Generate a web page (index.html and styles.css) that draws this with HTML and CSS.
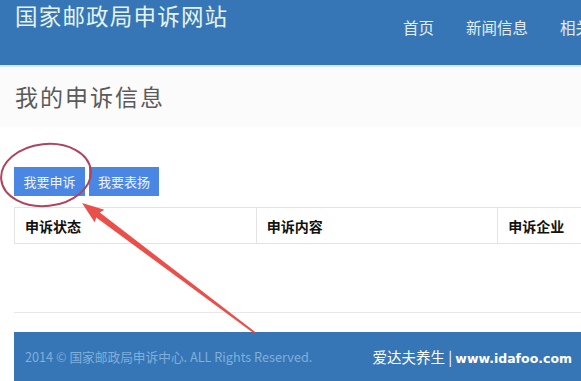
FILE: index.html
```html
<!DOCTYPE html>
<html lang="zh-CN">
<head>
    <meta charset="UTF-8">
    <meta name="viewport" content="width=device-width, initial-scale=1.0">
    <title>我的申诉信息 - 国家邮政局申诉网站</title>
    <link rel="stylesheet" href="styles.css">
</head>
<body>

<!-- Top bar -->
<div class="navbar">
    <div class="brand">国家邮政局申诉网站</div>
    <ul class="nav">
        <li>首页</li>
        <li>新闻信息</li>
        <li>相关法规</li>
    </ul>
</div>

<!-- Page title -->
<div class="page-header">
    <h1>我的申诉信息</h1>
</div>

<div class="content">
    <div class="actions">
        <button class="btn">我要申诉</button>
        <button class="btn">我要表扬</button>
    </div>

    <table class="list">
        <thead>
            <tr>
                <th>申诉状态</th>
                <th>申诉内容</th>
                <th>申诉企业</th>
            </tr>
        </thead>
        <tbody></tbody>
    </table>

    <hr class="divider">

    <div class="footer">
        <span class="copy">2014 &copy; 国家邮政局申诉中心. ALL Rights Reserved.</span>
        <span class="mark">爱达夫养生 | <b>www.idafoo.com</b></span>
    </div>
</div>

<!-- Annotation: circle + arrow drawn over the page -->
<svg class="annotation" width="581" height="381" viewBox="0 0 581 381">
    <ellipse cx="46" cy="175" rx="45" ry="31" transform="rotate(-6 46 175)" fill="none" stroke="#b0435e" stroke-width="2"/>
    <polygon fill="#e8403a" opacity="0.92"
             points="82,203 104.4,209.8 99.8,212.6 255.6,332.2 254.4,333.8 96.2,217.4 94.8,222.6"/>
</svg>

</body>
</html>
```

FILE: styles.css
```css
/* General */
body {
    margin: 0;
    padding: 0;
    width: 581px;
    height: 381px;
    overflow: hidden;
    position: relative;
    background-color: #fff;
    font-family: "Noto Sans CJK SC", "Liberation Sans", sans-serif;
    color: #333;
}

/* Top bar */
.navbar {
    height: 65px;
    background-color: #3776b6;
    border-bottom: 2px solid #d4eaf7;
    display: flex;
    padding-left: 15px;
    white-space: nowrap;
}
.brand {
    flex-shrink: 0;
    font-size: 22.5px;
    line-height: 24px;
    margin-top: 3px;
    color: #e4f3ef;
    letter-spacing: 1.2px;
}
.nav {
    list-style: none;
    margin: 0 0 0 auto;
    padding: 0;
    display: flex;
    gap: 32px;
    margin-right: -41px;
}
.nav li {
    font-size: 15.5px;
    line-height: 20px;
    margin-top: 17px;
    color: #e2eef4;
}

/* Page title band */
.page-header {
    height: 60px;
    background-color: #fbfbfb;
    padding-left: 15px;
    display: flex;
    align-items: center;
}
.page-header h1 {
    margin: -3px 0 0;
    font-size: 23px;
    font-weight: 400;
    letter-spacing: 2px;
    color: #5a5a5a;
}

/* Main area */
.content {
    padding-left: 14px;
    padding-top: 40px;
}
.actions {
    display: flex;
    gap: 4px;
}
.btn {
    height: 29px;
    width: 71px;
    padding: 0;
    border: none;
    background-color: #4a86e4;
    color: #eef4ff;
    font-family: inherit;
    font-size: 13px;
}
.actions .btn + .btn {
    width: 70px;
}

/* Table */
.list {
    margin-top: 11px;
    width: 726px;
    border-collapse: collapse;
}
.list th {
    height: 35px;
    padding: 0 0 0 10px;
    width: 232px;
    border: 1px solid #e3e3e3;
    text-align: left;
    font-size: 14px;
    font-weight: 700;
    color: #111;
}

.divider {
    margin: 68px 0 0;
    border: none;
    border-top: 1px solid #e8e8e8;
}

/* Footer */
.footer {
    margin-top: 19px;
    height: 49px;
    background-color: #3776b6;
    display: flex;
    align-items: center;
    padding: 0 9px 0 11px;
    white-space: nowrap;
}
.copy {
    font-size: 12.7px;
    color: #80afda;
}
.mark {
    margin-left: auto;
    font-size: 14.5px;
    color: #fff;
}
.mark b {
    font-family: "DejaVu Sans", sans-serif;
    font-size: 12.5px;
}

/* Red annotation overlay */
.annotation {
    position: absolute;
    left: 0;
    top: 0;
    pointer-events: none;
}
```
